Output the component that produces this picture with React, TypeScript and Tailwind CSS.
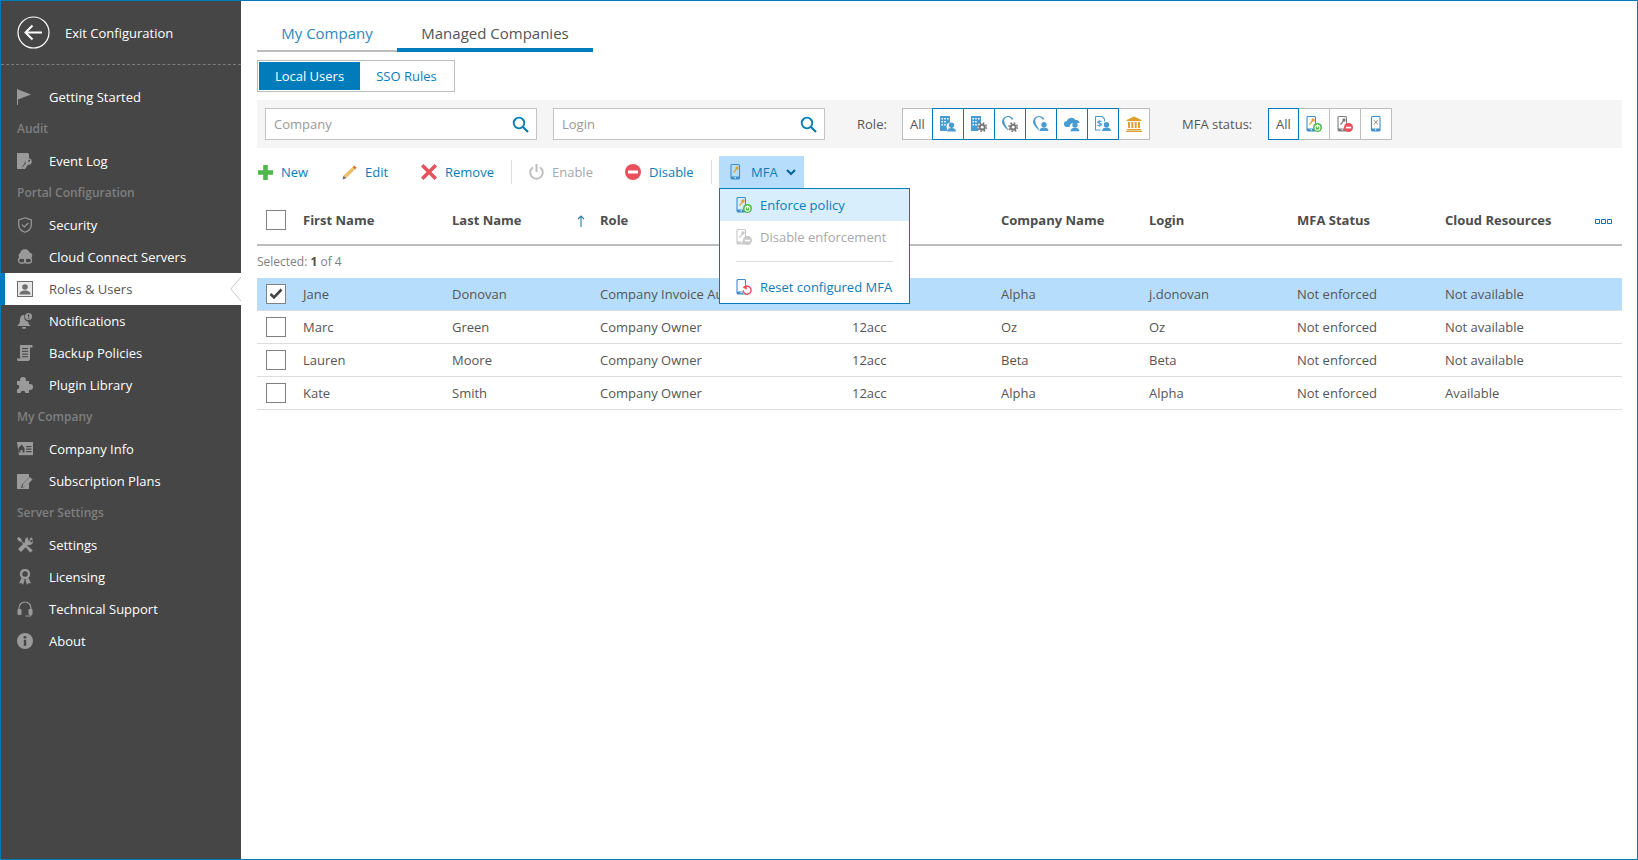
import type { ReactNode } from "react";

const GRAY = "#9a9a9a";
const BLUE = "#4a9bd0";

function Ico({ children, size = 16 }: { children: ReactNode; size?: number }) {
  return (
    <svg width={size} height={size} viewBox="0 0 16 16" className="shrink-0">
      {children}
    </svg>
  );
}

// sidebar icons
const FlagIcon = () => (
  <Ico>
    <rect x="0" y="0" width="1" height="16" fill={GRAY} />
    <path d="M1 0.5 14 5.500 1 10.500z" fill={GRAY} />
  </Ico>
);
const LogIcon = () => (
  <Ico>
    <path d="M0 0h11l1 1v5.500a4 4 0 0 0-4.500 4.500l-2 2v3H0z" fill={GRAY} />
    <circle cx="11.500" cy="8.500" r="3.200" fill={GRAY} />
    <path d="M9.500 10 5.500 14v2h2.500l3.500-5z" fill={GRAY} />
    <circle cx="12.200" cy="7.800" r="1" fill="#464646" />
  </Ico>
);
const ShieldIcon = () => (
  <Ico>
    <path d="M8 .8 14.300 3v5c0 3.800-3 6-6.300 7.300C4.700 14 1.700 11.800 1.700 8V3z" fill="none" stroke={GRAY} strokeWidth="1.200" />
    <path d="M4.800 7.600 7.300 10l4-4" fill="none" stroke={GRAY} strokeWidth="1.200" />
  </Ico>
);
const CloudIcon = () => (
  <Ico>
    <path d="M3.500 9.500A3 3 0 0 1 3.200 4 4.800 4.800 0 0 1 12.500 3.600 3 3 0 0 1 13 9.500z" fill={GRAY} />
    <rect x="1.500" y="9" width="7" height="5" rx="2.500" fill="none" stroke={GRAY} strokeWidth="1.300" />
    <rect x="7.500" y="9" width="7" height="5" rx="2.500" fill="none" stroke={GRAY} strokeWidth="1.300" />
  </Ico>
);
const RolesIcon = () => (
  <Ico>
    <rect x="0.500" y="0.500" width="15" height="15" fill="#e8e8e8" stroke="#6e6e6e" />
    <circle cx="8" cy="6" r="2.800" fill="#6e6e6e" />
    <path d="M2.500 13.500c0-3 2.500-4 5.500-4s5.500 1 5.500 4z" fill="#6e6e6e" />
  </Ico>
);
const BellIcon = () => (
  <Ico>
    <path d="M7 2C4 2 3 4.500 3 7c0 3-1 4-3 6h14c-1.500-1-2.500-2-3-4.500A4 4 0 0 1 7.500 3z" fill={GRAY} />
    <path d="M5 14a2 2 0 0 0 4 0z" fill={GRAY} />
    <circle cx="11.500" cy="3.500" r="3.500" fill={GRAY} />
    <rect x="11" y="1.300" width="1.200" height="2.800" fill="#464646" />
    <rect x="11" y="4.700" width="1.200" height="1.100" fill="#464646" />
  </Ico>
);
const ScrollIcon = () => (
  <Ico>
    <path d="M3 0h12.500v2.500H13V13a3 3 0 0 1-1.500 3H1.500A2 2 0 0 1 0 13.500h9.500V15L3 13z" fill={GRAY} />
    <rect x="5" y="3" width="6" height="1.100" fill="#464646" />
    <rect x="5" y="5.800" width="6" height="1.100" fill="#464646" />
    <rect x="5" y="8.600" width="6" height="1.100" fill="#464646" />
    <rect x="5" y="11.200" width="6" height="1.100" fill="#464646" />
  </Ico>
);
const PuzzleIcon = () => (
  <Ico>
    <rect x="0" y="4" width="12" height="12" fill={GRAY} />
    <circle cx="6" cy="3" r="3" fill={GRAY} />
    <circle cx="13" cy="10" r="3" fill={GRAY} />
    <circle cx="0" cy="10" r="2.300" fill="#464646" />
    <circle cx="6" cy="16" r="2.300" fill="#464646" />
  </Ico>
);
const CompanyIcon = () => (
  <Ico>
    <path d="M0 1h16v13.500l-1-.8-1 .8-1-.8-1 .8-1-.8-1 .8-1-.8-1 .8-1-.8-1 .8-1-.8-1 .8-1-.8-1 .8z" fill={GRAY} />
    <path d="M1.500 7 4.500 3.500 7.500 7v4.500h-2V9h-2v2.500h-2z" fill="#464646" />
    <rect x="9" y="5" width="5.500" height="1.200" fill="#464646" />
    <rect x="9" y="7.500" width="5.500" height="1.200" fill="#464646" />
    <rect x="9" y="10" width="5.500" height="1.200" fill="#464646" />
  </Ico>
);
const NoteIcon = () => (
  <Ico>
    <path d="M0 1h12v3.500L5 11.500 4 15l3.500-1 4.500-4.500V16H0z" fill={GRAY} />
    <path d="M12.800 4 15.500 6.500 8.500 13.500 5.500 14.500 6 11z" fill={GRAY} />
  </Ico>
);
const ToolsIcon = () => (
  <Ico>
    <path d="M1.500 0 4.300 1.800 4.800 4.200 15.800 13.200 13.200 15.800 4.200 4.800 1.800 4.300 0 1.500z" fill={GRAY} />
    <path d="M10.500 5.500 2.500 13.500" stroke={GRAY} strokeWidth="4" />
    <circle cx="12" cy="4" r="4" fill={GRAY} />
    <path d="M12 4 14 0H10.500L11.500 3.500 15 5.500 16 2.500z" fill="#464646" />
  </Ico>
);
const RibbonIcon = () => (
  <Ico>
    <circle cx="8" cy="5" r="4" fill="none" stroke={GRAY} strokeWidth="2.400" />
    <path d="M4.500 9 2 14.500l2.500-.5L6 16l1.500-5zM11.500 9 14 14.500l-2.500-.5L10 16l-1.500-5z" fill={GRAY} />
  </Ico>
);
const HeadsetIcon = () => (
  <Ico>
    <path d="M2 9.500V7a6 6 0 0 1 12 0v2.500" fill="none" stroke={GRAY} strokeWidth="1.200" />
    <rect x="0.500" y="8" width="4" height="6" rx="1.300" fill={GRAY} />
    <rect x="11.500" y="8" width="4" height="6" rx="1.300" fill={GRAY} />
    <path d="M14 13.500v1.500H8.500" fill="none" stroke={GRAY} strokeWidth="1" />
  </Ico>
);
const InfoIcon = () => (
  <Ico>
    <circle cx="8" cy="8" r="8" fill={GRAY} />
    <rect x="6.800" y="6.800" width="2.400" height="6" fill="#464646" />
    <circle cx="8" cy="4.300" r="1.400" fill="#464646" />
  </Ico>
);

// role filter icons
const Person = ({ x, y }: { x: number; y: number }) => (
  <g transform={`translate(${x} ${y})`}>
    <circle cx="4.500" cy="2.700" r="2.700" fill={BLUE} />
    <path d="M0 9c0-2.500 2-3.500 4.500-3.500S9 6.500 9 9z" fill={BLUE} />
  </g>
);
const Gear = ({ x, y }: { x: number; y: number }) => (
  <g transform={`translate(${x} ${y})`}>
    <circle cx="4.700" cy="4.700" r="4.300" fill="none" stroke="#777777" strokeWidth="1.500" strokeDasharray="1.700 1.680" />
    <circle cx="4.700" cy="4.700" r="3.500" fill="#777777" />
    <circle cx="4.700" cy="4.700" r="1.400" fill="white" />
  </g>
);
const Building = () => (
  <g>
    <path d="M0 0h10v6.500a4 4 0 0 0-3 6V15H0z" fill={BLUE} />
    <path d="M1.500 2h1.500v1.500H1.500zM4.200 2h1.500v1.500H4.200zM7 2h1.500v1.500H7zM1.500 5h1.500v1.500H1.500zM4.200 5h1.500v1.500H4.200zM1.500 8h1.500v1.500H1.500zM4.200 8h1.500v1.500H4.200z" fill="white" />
  </g>
);
const Pin = () => (
  <path d="M6 0a6 6 0 0 1 5.500 3.500H9.500A3.700 3.700 0 0 0 2.500 6c0 1.500.8 3 2.500 5.500L6.500 15C3 11.500 0 8.500 0 6a6 6 0 0 1 6-6z" fill={BLUE} />
);
const RoleCompany = () => <Ico><Building /><Person x={7} y={6.500} /></Ico>;
const RoleCompanyGear = () => <Ico><Building /><Gear x={6.500} y={6.500} /></Ico>;
const RolePinGear = () => <Ico><Pin /><Gear x={6.500} y={6.500} /></Ico>;
const RolePinPerson = () => <Ico><Pin /><Person x={6.500} y={6} /></Ico>;
const RoleCloud = () => (
  <Ico>
    <path d="M3 11A3 3 0 0 1 2.800 5 4.800 4.800 0 0 1 11.500 4 3.500 3.500 0 0 1 15.500 7H9.500C7 7 5.500 9 5.500 11z" fill={BLUE} />
    <Person x={6.500} y={6.200} />
  </Ico>
);
const RoleInvoice = () => (
  <Ico>
    <path d="M.5.500h6.500l2.500 2.500v2.500M.5.500v13.500h5" fill="none" stroke={BLUE} strokeWidth="1.100" />
    <text x="1.800" y="11" fontSize="9.500" fontWeight="700" fill={BLUE} fontFamily="Open Sans, sans-serif">$</text>
    <Person x={7} y={6} />
  </Ico>
);
const BankIcon = () => (
  <Ico>
    <path d="M8 .5 15.500 4v1H.5V4z" fill="#dda02c" />
    <path d="M2 6h2v6H2zM5.300 6h2v6h-2zM8.700 6h2v6h-2zM12 6h2v6h-2zM1 13h14v1.200H1zM0 14.800h16V16H0z" fill="#dda02c" />
  </Ico>
);

// mfa icons
const Phone = ({ color = "#3f8fc9" }: { color?: string }) => (
  <g>
    <rect x="1" y="0.500" width="8.500" height="14.500" rx="1.300" fill="none" stroke={color} strokeWidth="1.100" />
    <rect x="1" y="12.500" width="8.500" height="2.500" fill={color} />
    <circle cx="5.200" cy="13.700" r=".7" fill="white" />
  </g>
);
const Key = ({ color = "#e3a02f" }: { color?: string }) => (
  <g>
    <circle cx="7" cy="4" r="1.700" fill={color} />
    <path d="M6 4.500 3 8.300l1 .7L7 5.300z" fill={color} />
  </g>
);
const PowerBadge = () => (
  <g>
    <circle cx="11.500" cy="11.500" r="4.500" fill="#4eb84a" />
    <circle cx="11.500" cy="11.800" r="2.400" fill="none" stroke="white" strokeWidth="1.100" />
    <rect x="10.900" y="8.300" width="1.200" height="3.400" fill="white" />
  </g>
);
const StopBadge = ({ color = "#e8505b" }: { color?: string }) => (
  <g>
    <circle cx="11.500" cy="11.500" r="4.500" fill={color} />
    <rect x="8.800" y="10.700" width="5.400" height="1.700" fill="white" />
  </g>
);
const MfaEnforce = () => <Ico><Phone /><Key /><PowerBadge /></Ico>;
const MfaDisabled = () => <Ico><Phone color="#808080" /><Key color="#808080" /><StopBadge /></Ico>;
const MfaDisabledGhost = () => <Ico><Phone color="#c8c8c8" /><Key color="#c8c8c8" /><StopBadge color="#c8c8c8" /></Ico>;
const MfaNone = () => (
  <Ico>
    <g transform="translate(2.500 0)">
      <Phone />
      <path d="M3.300 4 7.300 8.500M7.300 4 3.300 8.500" stroke="#808080" strokeWidth=".9" />
    </g>
  </Ico>
);
const MfaReset = () => (
  <Ico>
    <Phone />
    <circle cx="11" cy="11" r="5" fill="white" />
    <path d="M8.300 8.300a4 4 0 1 1-1.200 3" fill="none" stroke="#e8505b" strokeWidth="1.400" />
    <path d="M10.800 5.800v5L6.500 8.200z" fill="#e8505b" />
  </Ico>
);

const SearchIcon = () => (
  <svg width="17" height="17" viewBox="0 0 17 17" className="shrink-0">
    <circle cx="7" cy="7" r="5.300" fill="none" stroke="#007cba" strokeWidth="1.800" />
    <path d="M11 11 16 16" stroke="#007cba" strokeWidth="2.200" />
  </svg>
);

type NavEntry = { label: string; icon?: ReactNode; active?: boolean };

const nav: NavEntry[] = [
  { label: "Getting Started", icon: <FlagIcon /> },
  { label: "Audit" },
  { label: "Event Log", icon: <LogIcon /> },
  { label: "Portal Configuration" },
  { label: "Security", icon: <ShieldIcon /> },
  { label: "Cloud Connect Servers", icon: <CloudIcon /> },
  { label: "Roles & Users", icon: <RolesIcon />, active: true },
  { label: "Notifications", icon: <BellIcon /> },
  { label: "Backup Policies", icon: <ScrollIcon /> },
  { label: "Plugin Library", icon: <PuzzleIcon /> },
  { label: "My Company" },
  { label: "Company Info", icon: <CompanyIcon /> },
  { label: "Subscription Plans", icon: <NoteIcon /> },
  { label: "Server Settings" },
  { label: "Settings", icon: <ToolsIcon /> },
  { label: "Licensing", icon: <RibbonIcon /> },
  { label: "Technical Support", icon: <HeadsetIcon /> },
  { label: "About", icon: <InfoIcon /> },
];

function Sidebar() {
  return (
    <aside className="w-[240px] shrink-0 bg-[#464646]">
      <div className="flex h-[64px] items-center gap-[15px] border-b border-dashed border-[#7c7c7c] pl-[16px]">
        <svg width="33" height="33" viewBox="0 0 33 33">
          <circle cx="16.500" cy="16.500" r="15.500" fill="none" stroke="white" strokeWidth="1.200" />
          <path d="M25 16.500H9M15.500 9.500l-7 7 7 7" fill="none" stroke="white" strokeWidth="2" />
        </svg>
        <span className="pt-[2px] text-[13px] text-white">Exit Configuration</span>
      </div>
      <div className="pt-[16px]">
        {nav.map((n) =>
          n.icon ? (
            <div
              key={n.label}
              className={
                n.active
                  ? "relative -ml-px flex h-8 items-center gap-[16px] border-l-[5px] border-[#007cba] bg-white pl-[12px] text-[13px] text-[#555555]"
                  : "flex h-8 items-center gap-[16px] pl-[16px] text-[13px] text-white"
              }
            >
              {n.icon}
              <span className="pt-[2px]">{n.label}</span>
              {n.active && (
                <svg width="11" height="24" viewBox="0 0 11 24" className="absolute right-0 top-[4px]">
                  <path d="M11 0 .8 12 11 24" fill="white" stroke="#c8c8c8" strokeWidth="1" />
                </svg>
              )}
            </div>
          ) : (
            <div key={n.label} className="flex h-8 items-center pl-[16px] text-[12px] font-semibold text-[#7f7f7f]">
              {n.label}
            </div>
          )
        )}
      </div>
    </aside>
  );
}

function SearchBox({ placeholder }: { placeholder: string }) {
  return (
    <div className="flex h-8 w-[272px] items-center justify-between border border-[#c4c4c4] bg-white pl-[8px] pr-[7px] text-[13px] text-[#999999]">
      <span className="pt-[2px]">{placeholder}</span>
      <SearchIcon />
    </div>
  );
}

function ToggleBtn({ children, on }: { children: ReactNode; on?: boolean }) {
  return (
    <div
      className={
        on
          ? "relative z-10 -mr-px flex h-8 w-[32px] items-center justify-center border border-[#007cba] bg-white text-[13px] text-[#555555] first:w-[31px]"
          : "-mr-px flex h-8 w-[32px] items-center justify-center border border-[#bdbdbd] bg-white text-[13px] text-[#555555] first:w-[31px]"
      }
    >
      {children}
    </div>
  );
}

function ToolBtn({ icon, label, off, className }: { icon: ReactNode; label: string; off?: boolean; className: string }) {
  return (
    <div className={`flex items-center gap-[8px] text-[13px] ${off ? "text-[#a8a8a8]" : "text-[#0a7cba]"} ${className}`}>
      {icon}
      <span className="pt-[2px]">{label}</span>
    </div>
  );
}

const columns = "grid grid-cols-[46px_149px_148px_252px_149px_148px_148px_148px_1fr] items-center";

const rows = [
  { first: "Jane", last: "Donovan", role: "Company Invoice Auditor", acc: "", company: "Alpha", login: "j.donovan", cloud: "Not available", sel: true },
  { first: "Marc", last: "Green", role: "Company Owner", acc: "12acc", company: "Oz", login: "Oz", cloud: "Not available" },
  { first: "Lauren", last: "Moore", role: "Company Owner", acc: "12acc", company: "Beta", login: "Beta", cloud: "Not available" },
  { first: "Kate", last: "Smith", role: "Company Owner", acc: "12acc", company: "Alpha", login: "Alpha", cloud: "Available" },
];

function Check({ on }: { on?: boolean }) {
  return (
    <div className="-mt-[2px] ml-[9px] flex size-5 items-center justify-center border border-[#808080] bg-white">
      {on && (
        <svg width="14" height="12" viewBox="0 0 14 12">
          <path d="M1.500 6 5 9.500 12.500 1.500" fill="none" stroke="#444444" strokeWidth="2.600" />
        </svg>
      )}
    </div>
  );
}

export default function App() {
  return (
    <div className="flex h-[860px] w-[1638px] overflow-hidden border border-[#007cba] bg-white font-['Open_Sans',sans-serif]">
      <Sidebar />
      <main className="min-w-0 flex-1 pl-[16px] pr-[15px]">
        {/* tabs */}
        <div className="flex h-[51px] items-stretch">
          <div className="flex w-[140px] items-center justify-center border-b-2 border-[#bdbdbd] pt-[16px] text-[15px] text-[#2b88c2]">
            My Company
          </div>
          <div className="flex h-[51px] w-[196px] items-center justify-center border-b-4 border-[#007cba] pt-[18px] text-[15px] text-[#555555]">
            Managed Companies
          </div>
        </div>

        <div className="mt-[8px] flex h-8 w-[198px] items-center border border-[#bdbdbd] p-px text-[13px]">
          <div className="flex h-full w-[101px] items-center justify-center bg-[#007cba] pt-[2px] text-white">Local Users</div>
          <div className="flex flex-1 items-center justify-center pt-[2px] text-[#0a7cba]">SSO Rules</div>
        </div>

        {/* filters */}
        <div className="mt-[8px] flex h-[48px] items-center bg-[#f5f5f5] pl-[8px] text-[13px] text-[#555555]">
          <SearchBox placeholder="Company" />
          <div className="ml-[16px]">
            <SearchBox placeholder="Login" />
          </div>
          <span className="ml-[32px] w-[45px] pt-[2px]">Role:</span>
          <div className="flex">
            <ToggleBtn><span className="pt-[2px]">All</span></ToggleBtn>
            <ToggleBtn on><RoleCompany /></ToggleBtn>
            <ToggleBtn on><RoleCompanyGear /></ToggleBtn>
            <ToggleBtn on><RolePinGear /></ToggleBtn>
            <ToggleBtn on><RolePinPerson /></ToggleBtn>
            <ToggleBtn on><RoleCloud /></ToggleBtn>
            <ToggleBtn on><RoleInvoice /></ToggleBtn>
            <ToggleBtn><BankIcon /></ToggleBtn>
          </div>
          <span className="ml-[33px] w-[86px] pt-[2px]">MFA status:</span>
          <div className="flex">
            <ToggleBtn on><span className="pt-[2px]">All</span></ToggleBtn>
            <ToggleBtn><MfaEnforce /></ToggleBtn>
            <ToggleBtn><MfaDisabled /></ToggleBtn>
            <ToggleBtn><MfaNone /></ToggleBtn>
          </div>
        </div>

        {/* toolbar */}
        <div className="mt-[8px] flex h-8 items-center">
          <ToolBtn
            className="ml-px w-[84px]"
            label="New"
            icon={
              <svg width="15" height="15" viewBox="0 0 15 15">
                <path d="M5.200 0h4.600v5.200H15v4.600H9.800V15H5.200V9.800H0V5.200h5.200z" fill="#4eb84a" />
              </svg>
            }
          />
          <ToolBtn
            className="w-[79px]"
            label="Edit"
            icon={
              <svg width="15" height="15" viewBox="0 0 16 16">
                <path d="M13 .5 15.500 3 4.500 14 1.500 11.500z" fill="#ecc16d" />
                <path d="M13 .5 15.500 3 14 4.500 11.500 2z" fill="#e0703d" />
                <path d="M1.500 11.500 4.500 14 .5 15.500z" fill="#6b6b6b" />
              </svg>
            }
          />
          <ToolBtn
            className="w-[90px]"
            label="Remove"
            icon={
              <svg width="16" height="16" viewBox="0 0 16 16">
                <path d="M2.500 0 8 5.500 13.500 0 16 2.500 10.500 8 16 13.500 13.500 16 8 10.500 2.500 16 0 13.500 5.500 8 0 2.500z" fill="#e8505b" />
              </svg>
            }
          />
          <div className="h-[24px] w-px bg-[#dddddd]" />
          <ToolBtn
            off
            className="ml-[17px] w-[96px]"
            label="Enable"
            icon={
              <svg width="15" height="16" viewBox="0 0 15 16">
                <path d="M4 3.200a6.300 6.300 0 1 0 7 0" fill="none" stroke="#bdbdbd" strokeWidth="1.800" />
                <rect x="6.500" y="0" width="2" height="8" fill="#bdbdbd" />
              </svg>
            }
          />
          <ToolBtn
            className="w-[86px]"
            label="Disable"
            icon={
              <svg width="16" height="16" viewBox="0 0 16 16">
                <circle cx="8" cy="8" r="8" fill="#e8505b" />
                <rect x="3" y="6.500" width="10" height="3" fill="white" />
              </svg>
            }
          />
          <div className="h-[24px] w-px bg-[#dddddd]" />
          <div className="relative ml-[7px] flex h-8 w-[85px] items-center bg-[#b6defc] pl-[11px] text-[13px] text-[#0a7cba]">
            <Ico>
              <Phone />
              <Key />
            </Ico>
            <span className="ml-[5px] pt-[2px]">MFA</span>
            <svg width="10" height="7" viewBox="0 0 10 7" className="ml-[8px]">
              <path d="M1 1 5 5 9 1" fill="none" stroke="#00629b" strokeWidth="2" />
            </svg>

            <div className="absolute left-0 top-full z-20 w-[191px] border border-[#007cba] bg-white text-[13px]">
              <div className="flex h-8 items-center gap-[8px] bg-[#d9eefd] pl-[16px] text-[#0a7cba]">
                <MfaEnforce /> <span className="pt-[2px]">Enforce policy</span>
              </div>
              <div className="flex h-8 items-center gap-[8px] pl-[16px] text-[#a8a8a8]">
                <MfaDisabledGhost /> <span className="pt-[2px]">Disable enforcement</span>
              </div>
              <div className="mx-[16px] mb-[9px] mt-[8px] h-px bg-[#dddddd]" />
              <div className="flex h-[32px] items-center gap-[8px] pl-[16px] text-[#0a7cba]">
                <MfaReset /> <span className="pt-[2px]">Reset configured MFA</span>
              </div>
            </div>
          </div>
        </div>

        {/* table */}
        <div className={`${columns} h-[58px] border-b-2 border-[#bdbdbd] pt-[10px] text-[13px] font-bold text-[#4d4d4d]`}>
          <Check />
          <span>First Name</span>
          <span className="relative">
            Last Name
            <svg width="8" height="12" viewBox="0 0 8 12" className="absolute left-[125px] top-[4px]">
              <path d="M4 12V1M1 4l3-3 3 3" fill="none" stroke="#2a7fae" strokeWidth="1.100" />
            </svg>
          </span>
          <span>Role</span>
          <span />
          <span>Company Name</span>
          <span>Login</span>
          <span>MFA Status</span>
          <span className="flex items-center justify-between">
            Cloud Resources
            <svg width="17" height="5" viewBox="0 0 17 5" className="mr-[10px]">
              <path d="M.5.500h4v4h-4zM6.500.500h4v4h-4zM12.500.500h4v4h-4z" fill="none" stroke="#007cba" />
            </svg>
          </span>
        </div>
        <div className="flex h-[32px] items-center text-[12px] text-[#808080]">
          Selected:&nbsp;<b className="font-bold text-[#4d4d4d]">1</b>&nbsp;of 4
        </div>
        {rows.map((r) => (
          <div
            key={r.first}
            className={`${columns} h-[33px] border-b border-[#dddddd] pt-[2px] text-[13px] text-[#555555] ${r.sel ? "bg-[#b6defc]" : ""}`}
          >
            <Check on={r.sel} />
            <span>{r.first}</span>
            <span>{r.last}</span>
            <span className="whitespace-nowrap">{r.role}</span>
            <span>{r.acc}</span>
            <span>{r.company}</span>
            <span>{r.login}</span>
            <span>Not enforced</span>
            <span>{r.cloud}</span>
          </div>
        ))}
      </main>
    </div>
  );
}
